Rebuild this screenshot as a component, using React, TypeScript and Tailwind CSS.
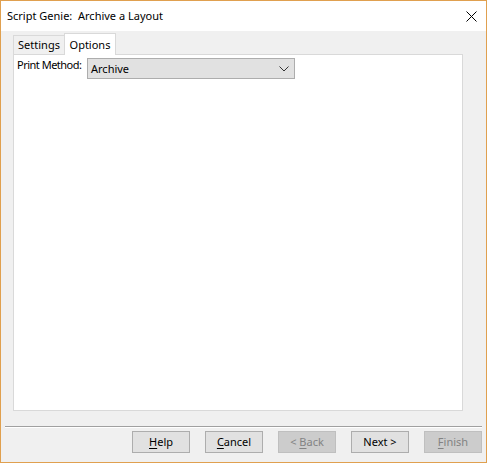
import React from 'react';

const font = { fontFamily: '"Noto Sans", "Liberation Sans", sans-serif' };

// Windows-style push button, disabled ones go flat grey
function DlgButton({
  label,
  mnemonic,
  disabled,
}: {
  label: string;
  mnemonic?: number;
  disabled?: boolean;
}) {
  const parts =
    mnemonic === undefined
      ? [label]
      : [
          label.slice(0, mnemonic),
          <span key="m" className="underline underline-offset-[2px]">
            {label[mnemonic]}
          </span>,
          label.slice(mnemonic + 1),
        ];
  return (
    <div
      className={
        disabled
          ? 'w-[58px] h-[22px] flex items-center justify-center border border-[#bfbfbf] bg-[#cccccc] text-[#838383] text-[11px] leading-[16px] whitespace-pre'
          : 'w-[58px] h-[22px] flex items-center justify-center border border-[#adadad] bg-[#e1e1e1] text-black text-[11px] leading-[16px] whitespace-pre'
      }
    >
      {parts}
    </div>
  );
}

export default function App() {
  return (
    <div
      className="w-[487px] h-[463px] border border-[#e0a04f] bg-[#f0f0f0] flex flex-col text-black overflow-hidden"
      style={font}
    >
      {/* title bar */}
      <div className="h-[30px] bg-white flex items-center justify-between pl-[6px] pr-[9px] shrink-0">
        <span className="text-[11px] leading-[16px] whitespace-pre">
          Script Genie:  Archive a Layout
        </span>
        <svg width="11" height="11" viewBox="0 0 11 11">
          <path d="M0.5 0.5 L10.5 10.5 M10.5 0.5 L0.5 10.5" stroke="#000" strokeWidth="1" />
        </svg>
      </div>

      {/* tabs */}
      <div className="ml-[12px] mt-[2px] flex items-end">
        <div className="w-[52px] h-[19px] border border-b-0 border-[#d9d9d9] bg-[#f0f0f0] flex items-center justify-center text-[11px] leading-[16px]">
          Settings
        </div>
        <div className="w-[52px] h-[22px] -mb-px -ml-px border border-b-0 border-[#d9d9d9] bg-white relative z-10 flex items-center justify-center text-[11px] leading-[16px]">
          Options
        </div>
      </div>

      {/* tab page */}
      <div className="ml-[12px] w-[450px] h-[357px] border border-[#d9d9d9] bg-white pl-[3px] pt-[3px] shrink-0">
        <div className="flex items-start">
          <span className="w-[70px] shrink-0 whitespace-nowrap -mt-[1px] text-[11px] leading-[16px] tracking-[-0.5px]">
            Print Method:
          </span>
          <div className="w-[208px] h-[21px] border border-[#adadad] bg-[#e1e1e1] flex items-center justify-between pl-[3px] pr-[5px]">
            <span className="text-[11px] leading-[16px] mt-[1px]">Archive</span>
            <svg width="10" height="6" viewBox="0 0 10 6">
              <path d="M0.5 0.5 L5 5 L9.5 0.5" fill="none" stroke="#333" strokeWidth="1" />
            </svg>
          </div>
        </div>
      </div>

      {/* separator */}
      <div className="mx-[4px] mt-[15px] border-t border-t-[#a0a0a0] border-b border-b-white" />

      {/* buttons */}
      <div className="mt-[3px] flex justify-end gap-[15px] pr-[4px]">
        <DlgButton label="Help" mnemonic={0} />
        <DlgButton label="Cancel" mnemonic={0} />
        <DlgButton label="< Back" mnemonic={2} disabled />
        <DlgButton label="Next >" />
        <DlgButton label="Finish" mnemonic={0} disabled />
      </div>
    </div>
  );
}
